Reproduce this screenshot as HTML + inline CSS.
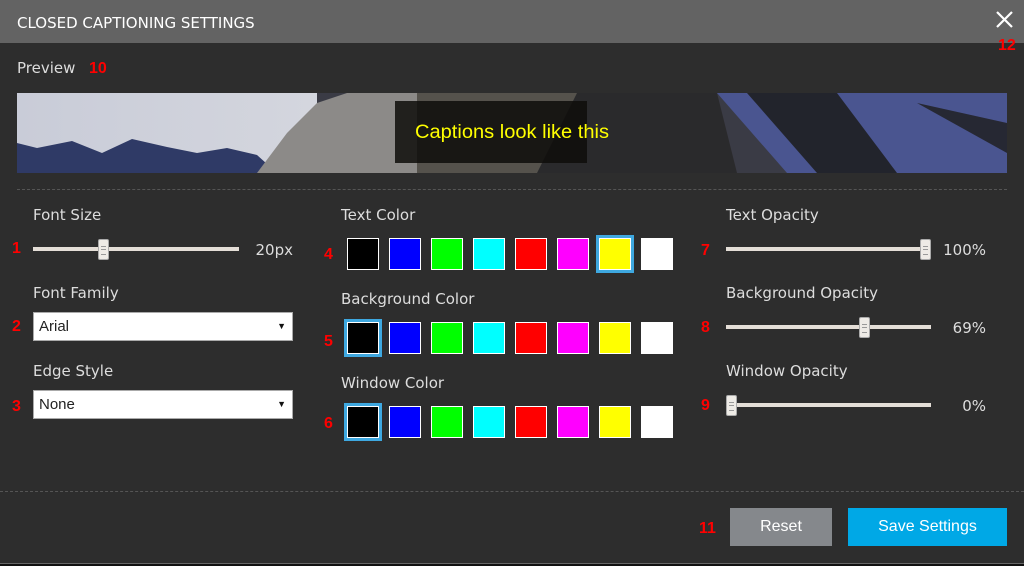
<!DOCTYPE html>
<html><head><meta charset="utf-8"><style>
*{margin:0;padding:0;box-sizing:border-box}
body{width:1024px;height:566px;background:#2d2d2d;font-family:"DejaVu Sans","Liberation Sans",sans-serif;color:#ddd;position:relative;overflow:hidden}
.a{position:absolute}
.lbl{font-size:15px;color:#ddd}
.n{position:absolute;color:#f00;font-weight:bold;font-family:"Liberation Sans",sans-serif;font-size:16px}
.track{position:absolute;height:4px;background:#e4ded7}
.thumb{position:absolute;width:11px;height:21px;background:#eeebe6;border:1px solid #aaa;border-radius:2px}
.thumb:after{content:"";position:absolute;left:2px;top:6px;width:5px;height:7px;border-top:1px solid #999;border-bottom:1px solid #999}
.thumb:before{content:"";position:absolute;left:2px;top:9px;width:5px;border-top:1px solid #999}
.val{position:absolute;font-size:15px;color:#ddd;text-align:right}
.sel{position:absolute;width:260px;height:29px;background:#fff;border:1px solid #aaa;color:#222;font-family:"Liberation Sans",sans-serif;font-size:15px;padding:5px 0 0 5px}
.sel:after{content:"▼";position:absolute;right:6px;top:8px;font-size:9px;color:#111}
.sw{position:absolute;width:32px;height:32px;border:1px solid #fff}
.ring{position:absolute;width:38px;height:38px;border:3px solid #3ea8e0}
</style></head><body>
<div class="a" style="left:0;top:0;width:1024px;height:43px;background:#636363"></div>
<div class="a" style="left:17px;top:14px;font-size:15px;color:#fff">CLOSED CAPTIONING SETTINGS</div>
<svg class="a" style="left:996px;top:11px" width="17" height="17"><path d="M1 1L16 16M16 1L1 16" stroke="#fff" stroke-width="2.2"/></svg>
<div class="n" style="left:998px;top:37px">12</div>
<div class="a lbl" style="left:17px;top:59px">Preview</div>
<div class="n" style="left:89px;top:60px">10</div>
<svg class="a" style="left:17px;top:93px" width="990" height="80">
<defs><linearGradient id="sky" x1="0" x2="1"><stop offset="0" stop-color="#c9ccd8"/><stop offset="1" stop-color="#d4d6de"/></linearGradient></defs>
<rect width="990" height="80" fill="#3a3b45"/>
<rect width="300" height="80" fill="url(#sky)"/>
<path d="M0 50 L20 55 L55 48 L85 60 L115 46 L150 54 L180 60 L210 55 L240 62 L260 80 L0 80Z" fill="#2f3a66"/>
<path d="M240 80 L270 40 L300 10 L330 0 L400 0 L400 80Z" fill="#8c8a88"/>
<path d="M400 0 L560 0 L540 80 L400 80Z" fill="#55524c"/>
<path d="M560 0 L700 0 L720 80 L520 80Z" fill="#2a2a2c"/>
<path d="M700 0 L990 0 L990 80 L770 80Z" fill="#4a5590"/>
<path d="M730 0 L820 0 L880 80 L800 80Z" fill="#22242c"/>
<path d="M900 10 L990 30 L990 60Z" fill="#262833"/>
<rect x="378" y="8" width="192" height="62" fill="#0e0d0b" opacity=".85"/>
<text x="398" y="45" fill="#ffff00" font-family="Liberation Sans,sans-serif" font-size="19" textLength="194" lengthAdjust="spacingAndGlyphs">Captions look like this</text>
</svg>
<div class="a" style="left:17px;top:189px;width:990px;border-top:1px dashed #555"></div>
<div class="a" style="left:0;top:491px;width:1024px;border-top:1px dashed #555"></div>

<div class="a lbl" style="left:33px;top:206px">Font Size</div>
<div class="n" style="left:12px;top:240px">1</div>
<div class="track" style="left:33px;top:247px;width:206px"></div>
<div class="thumb" style="left:98px;top:239px"></div>
<div class="val" style="left:240px;top:241px;width:53px">20px</div>
<div class="a lbl" style="left:33px;top:284px">Font Family</div>
<div class="n" style="left:12px;top:318px">2</div>
<div class="sel" style="left:33px;top:312px">Arial</div>
<div class="a lbl" style="left:33px;top:362px">Edge Style</div>
<div class="n" style="left:12px;top:398px">3</div>
<div class="sel" style="left:33px;top:390px">None</div>

<div class="a lbl" style="left:341px;top:206px">Text Color</div>
<div class="a lbl" style="left:341px;top:290px">Background Color</div>
<div class="a lbl" style="left:341px;top:374px">Window Color</div>
<div class="n" style="left:324px;top:246px">4</div>
<div class="n" style="left:324px;top:333px">5</div>
<div class="n" style="left:324px;top:415px">6</div>
<div id="sw"></div>

<div class="a lbl" style="left:726px;top:206px">Text Opacity</div>
<div class="n" style="left:701px;top:242px">7</div>
<div class="track" style="left:726px;top:247px;width:205px"></div>
<div class="thumb" style="left:920px;top:239px"></div>
<div class="val" style="left:930px;top:241px;width:56px">100%</div>
<div class="a lbl" style="left:726px;top:284px">Background Opacity</div>
<div class="n" style="left:701px;top:319px">8</div>
<div class="track" style="left:726px;top:325px;width:205px"></div>
<div class="thumb" style="left:859px;top:317px"></div>
<div class="val" style="left:930px;top:319px;width:56px">69%</div>
<div class="a lbl" style="left:726px;top:362px">Window Opacity</div>
<div class="n" style="left:701px;top:397px">9</div>
<div class="track" style="left:726px;top:403px;width:205px"></div>
<div class="thumb" style="left:726px;top:395px"></div>
<div class="val" style="left:930px;top:397px;width:56px">0%</div>

<div class="n" style="left:699px;top:520px">11</div>
<div class="a" style="left:730px;top:508px;width:102px;height:38px;background:#85888c;color:#fff;font-family:'Liberation Sans',sans-serif;font-size:16px;text-align:center;line-height:38px">Reset</div>
<div class="a" style="left:848px;top:508px;width:159px;height:38px;background:#00a8e6;color:#fff;font-family:'Liberation Sans',sans-serif;font-size:16px;text-align:center;line-height:38px">Save Settings</div>
<div class="a" style="left:0;top:563px;width:1024px;height:3px;background:#111;border-top:1px solid #666"></div>
<script>
var c=["#000","#00f","#0f0","#0ff","#f00","#f0f","#ff0","#fff"],rows=[238,322,406],selI=[6,0,0],h="";
rows.forEach(function(y,r){c.forEach(function(col,i){var x=347+i*42;if(i==selI[r])h+='<div class="ring" style="left:'+(x-3)+'px;top:'+(y-3)+'px"></div>';h+='<div class="sw" style="left:'+x+'px;top:'+y+'px;background:'+col+'"></div>';});});
document.getElementById("sw").outerHTML=h;
</script>
</body></html>
